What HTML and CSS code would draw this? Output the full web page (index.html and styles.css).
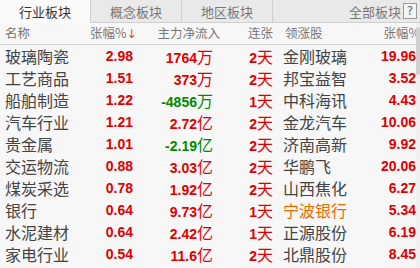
FILE: index.html
```html
<!DOCTYPE html>
<html>
<head>
<meta charset="utf-8">
<link rel="stylesheet" href="styles.css">
</head>
<body>
<div class="app">
  <div class="tabs">
    <div class="tab active">行业板块</div>
    <div class="tab">概念板块</div>
    <div class="tab">地区板块</div>
    <div class="tab-rest"><span class="all">全部板块</span><span class="help">?</span></div>
  </div>
  <div class="body">
    <div class="table">
      <div class="row head">
        <div class="c-name">名称</div>
        <div class="c-r h-zf">张幅%<span class="arrow">↓</span></div>
        <div class="c-r h-flow">主力净流入</div>
        <div class="c-r">连张</div>
        <div class="c-lead">领涨股</div>
        <div class="c-r c-last">张幅%</div>
      </div>
      <div class="row"><div class="c-name">玻璃陶瓷</div><div class="c-r num red">2.98</div><div class="c-r num red">1764<span class="u">万</span></div><div class="c-r num red">2<span class="u">天</span></div><div class="c-lead">金刚玻璃</div><div class="c-r num red">19.96</div></div>
      <div class="row"><div class="c-name">工艺商品</div><div class="c-r num red">1.51</div><div class="c-r num red">373<span class="u">万</span></div><div class="c-r num red">2<span class="u">天</span></div><div class="c-lead">邦宝益智</div><div class="c-r num red">3.52</div></div>
      <div class="row"><div class="c-name">船舶制造</div><div class="c-r num red">1.22</div><div class="c-r num green">-4856<span class="u">万</span></div><div class="c-r num red">1<span class="u">天</span></div><div class="c-lead">中科海讯</div><div class="c-r num red">4.43</div></div>
      <div class="row"><div class="c-name">汽车行业</div><div class="c-r num red">1.21</div><div class="c-r num red">2.72<span class="u">亿</span></div><div class="c-r num red">2<span class="u">天</span></div><div class="c-lead">金龙汽车</div><div class="c-r num red">10.06</div></div>
      <div class="row"><div class="c-name">贵金属</div><div class="c-r num red">1.01</div><div class="c-r num green">-2.19<span class="u">亿</span></div><div class="c-r num red">2<span class="u">天</span></div><div class="c-lead">济南高新</div><div class="c-r num red">9.92</div></div>
      <div class="row"><div class="c-name">交运物流</div><div class="c-r num red">0.88</div><div class="c-r num red">3.03<span class="u">亿</span></div><div class="c-r num red">2<span class="u">天</span></div><div class="c-lead">华鹏飞</div><div class="c-r num red">20.06</div></div>
      <div class="row"><div class="c-name">煤炭采选</div><div class="c-r num red">0.78</div><div class="c-r num red">1.92<span class="u">亿</span></div><div class="c-r num red">2<span class="u">天</span></div><div class="c-lead">山西焦化</div><div class="c-r num red">6.27</div></div>
      <div class="row"><div class="c-name">银行</div><div class="c-r num red">0.64</div><div class="c-r num red">9.73<span class="u">亿</span></div><div class="c-r num red">1<span class="u">天</span></div><div class="c-lead orange">宁波银行</div><div class="c-r num red">5.34</div></div>
      <div class="row"><div class="c-name">水泥建材</div><div class="c-r num red">0.64</div><div class="c-r num red">2.42<span class="u">亿</span></div><div class="c-r num red">1<span class="u">天</span></div><div class="c-lead">正源股份</div><div class="c-r num red">6.19</div></div>
      <div class="row"><div class="c-name">家电行业</div><div class="c-r num red">0.54</div><div class="c-r num red">11.6<span class="u">亿</span></div><div class="c-r num red">2<span class="u">天</span></div><div class="c-lead">北鼎股份</div><div class="c-r num red">8.45</div></div>
    </div>
    <div class="scroll"><div class="thumb"></div></div>
  </div>
</div>
</body>
</html>
```
FILE: styles.css
```css
* { box-sizing: border-box; }
html, body { margin: 0; padding: 0; }
body {
  width: 420px;
  height: 268px;
  overflow: hidden;
  background: #f7f7f7;
  font-family: "Noto Sans CJK SC", "Noto Sans", sans-serif;
  color: #444;
}
.app { display: flex; flex-direction: column; height: 268px; }
.tabs {
  display: flex;
  height: 23px;
  background: #e9e9e9;
  border-bottom: 1px solid #cfcfcf;
}
.tab {
  width: 91px;
  display: flex;
  align-items: center;
  justify-content: center;
  font-size: 13px;
  color: #777;
  border-right: 1px solid #cfcfcf;
  line-height: 1;
}
.tab.active {
  background: #fafafa;
  color: #333;
  height: 23px;
}
.tab-rest {
  flex: 1;
  display: flex;
  align-items: center;
  justify-content: flex-end;
  padding-right: 3px;
  gap: 2px;
  font-size: 13px;
  color: #777;
  line-height: 1;
}
.help {
  width: 14px;
  height: 16px;
  border: 1px solid #9a9a9a;
  font-size: 12px;
  display: flex;
  align-items: center;
  justify-content: center;
  font-family: "DejaVu Sans", sans-serif;
  color: #666;
  background: #f4f4f4;
}
.body { flex: 1; display: flex; }
.table { flex: 1; display: flex; flex-direction: column; }
.row {
  display: grid;
  grid-template-columns: 85px 43px 80px 60px 1fr 60px;
  height: 22px;
  align-items: center;
  padding-left: 5px;
  font-size: 16px;
  line-height: 1;
  white-space: nowrap;
}
.row.head {
  height: 22px;
  font-size: 12.5px;
  color: #777;
  border-bottom: 1px solid #d4d4d4;
}
.c-name { color: #444; }
.head .c-name { color: #777; }
.c-r { text-align: right; }
.c-lead { padding-left: 10px; color: #444; }
.head .c-lead { padding-left: 12px; color: #777; }
.head .h-zf { margin-right: 3px; }
.head .h-flow { margin-right: -7px; }
.head .c-last { margin-right: -4px; }
.arrow { color: #e0500a; font-size: 12px; font-family: "DejaVu Sans", sans-serif; }
.num {
  font-family: "Liberation Sans", Arial, sans-serif;
  font-weight: bold;
  font-size: 14px;
}
.u {
  font-family: "Noto Sans CJK SC", sans-serif;
  font-weight: normal;
  font-size: 16px;
}
.red { color: #e00000; }
.green { color: #008a00; }
.orange { color: #f06a00; }
.scroll {
  width: 4px;
  background: #f0f0f0;
  padding-top: 4px;
}
.thumb {
  height: 48px;
  background: #d0d0d0;
  border-radius: 2px;
}
```
